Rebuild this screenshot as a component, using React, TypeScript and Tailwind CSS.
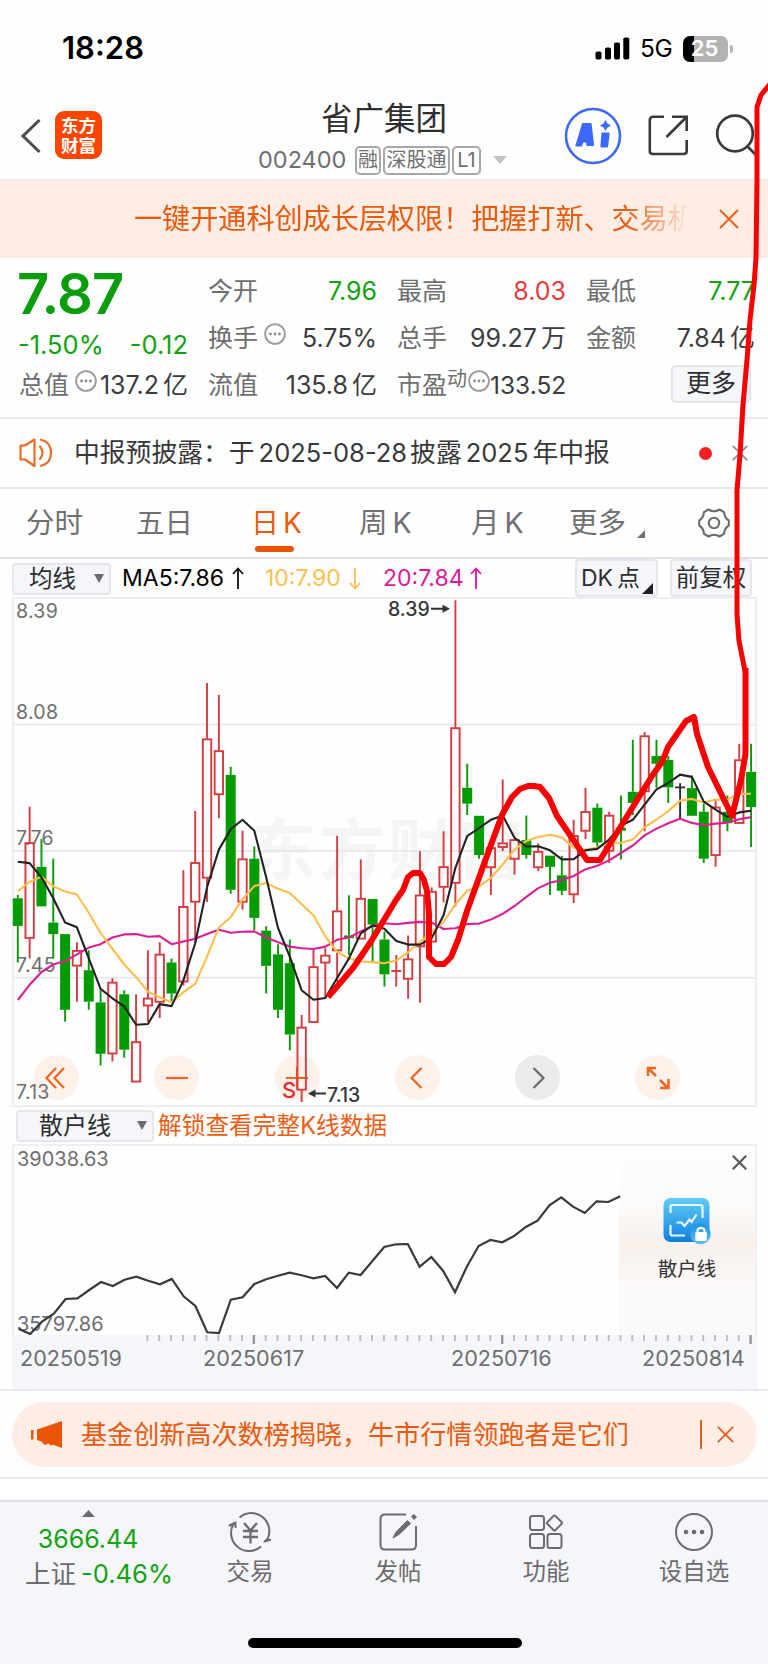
import React from "react";

/* ---------- chart data ---------- */

type Candle = [kind: "r" | "g" | "k", high: number, top: number, bottom: number, low: number];

const CANDLES: Candle[] = [
  ["g", 902, 912, 994, 1102], ["r", 641, 747, 1031, 1090], ["g", 737, 819, 936, 936], ["g", 795, 984, 1018, 1090],
  ["g", 1018, 1018, 1242, 1277], ["r", 1042, 1066, 1113, 1218], ["g", 1066, 1125, 1218, 1242], ["g", 1184, 1220, 1372, 1407],
  ["r", 1149, 1160, 1373, 1395], ["g", 1184, 1196, 1360, 1384], ["r", 1196, 1336, 1456, 1456], ["r", 1066, 1207, 1231, 1277],
  ["r", 1042, 1077, 1220, 1266], ["g", 1090, 1102, 1194, 1218], ["r", 829, 936, 1160, 1170], ["r", 654, 806, 924, 1042],
  ["r", 275, 440, 853, 923], ["r", 311, 475, 606, 675], ["g", 523, 547, 887, 899], ["r", 712, 795, 924, 946],
  ["g", 759, 795, 970, 1006], ["g", 995, 1008, 1112, 1194], ["g", 1048, 1078, 1242, 1266], ["g", 1034, 1104, 1315, 1362],
  ["r", 1257, 1293, 1480, 1515], ["r", 1060, 1114, 1280, 1280], ["r", 1060, 1080, 1104, 1206], ["r", 727, 949, 1068, 1160],
  ["g", 903, 1022, 1030, 1080], ["r", 797, 912, 1033, 1033], ["g", 914, 914, 990, 1102], ["g", 1010, 1034, 1137, 1173],
  ["r", 1080, 1127, 1127, 1173], ["r", 1022, 1091, 1152, 1209], ["r", 773, 902, 1056, 1221], ["r", 880, 891, 1042, 1042],
  ["r", 714, 818, 880, 924], ["r", 30, 407, 868, 936], ["g", 514, 585, 632, 666], ["g", 668, 668, 784, 795],
  ["r", 750, 762, 822, 902], ["r", 561, 748, 762, 772], ["r", 738, 738, 797, 842], ["g", 667, 740, 784, 795],
  ["r", 750, 773, 822, 831], ["g", 786, 786, 819, 902], ["g", 786, 844, 890, 902], ["r", 680, 726, 902, 926],
  ["r", 585, 655, 714, 737], ["g", 632, 644, 747, 762], ["r", 656, 666, 773, 808], ["g", 608, 703, 712, 797],
  ["g", 443, 597, 630, 666], ["r", 420, 431, 597, 714], ["g", 443, 491, 514, 585], ["g", 491, 503, 584, 630],
  ["k", 572, 584, 584, 680], ["g", 549, 586, 668, 668], ["g", 632, 656, 795, 808], ["r", 620, 642, 786, 819],
  ["g", 608, 656, 690, 714], ["r", 455, 502, 691, 691], ["g", 455, 538, 642, 760],
];

const MA5 = [
  804, 808, 850, 912, 984, 998, 1090, 1180, 1208, 1232, 1286, 1284, 1225, 1231, 1155, 1045, 880, 768, 708, 680, 712,
  850, 1000, 1085, 1184, 1212, 1207, 1148, 1090, 1016, 992, 1002, 1038, 1049, 1049, 1030, 962, 822, 728, 704, 680, 667,
  733, 759, 758, 770, 797, 796, 770, 766, 738, 697, 680, 635, 590, 571, 546, 553, 626, 650, 671, 658, 653,
];
const MA10 = [
  891, 864, 848, 877, 892, 901, 955, 1015, 1061, 1108, 1145, 1188, 1205, 1220, 1190, 1165, 1085, 998, 968, 915, 876,
  867, 884, 896, 930, 962, 1025, 1071, 1090, 1099, 1101, 1104, 1096, 1072, 1042, 1012, 982, 930, 890, 877, 852, 812,
  768, 743, 731, 724, 732, 762, 768, 762, 750, 748, 738, 702, 679, 654, 623, 618, 629, 620, 620, 603, 603,
];
const MA20 = [
  1213, 1168, 1130, 1108, 1098, 1078, 1058, 1048, 1028, 1019, 1018, 1026, 1024, 1048, 1040, 1032, 1018, 1005, 1014,
  1011, 1010, 1028, 1042, 1055, 1060, 1062, 1055, 1035, 1028, 1010, 994, 986, 989, 985, 982, 984, 1003, 1001, 988, 987,
  975, 958, 935, 908, 882, 866, 858, 846, 826, 816, 800, 778, 756, 726, 706, 690, 677, 689, 696, 691, 688, 678, 672,
];
const RETAIL = [
  686, 702, 665, 641, 597, 595, 570, 546, 558, 539, 530, 542, 553, 537, 589, 618, 697, 699, 599, 592, 552, 538, 527,
  518, 526, 535, 528, 564, 518, 525, 483, 441, 433, 432, 500, 471, 513, 577, 500, 438, 420, 427, 408, 381, 362, 316,
  292, 320, 339, 304, 306, 289,
];

const STEP = 11.827;
const cx = (i: number) => 5.8 + i * STEP; // relative to the chart's left edge
const cy = (v: number) => v / 2.9585 - 7; // relative to the chart's top edge
const line = (d: number[]) => d.map((v, i) => `${cx(i).toFixed(1)},${cy(v).toFixed(1)}`).join(" ");
const retailLine = RETAIL.map((v, i) => `${(6.4 + i * 11.8).toFixed(1)},${(v / 3 - 44).toFixed(1)}`).join(" ");

const COLORS = { r: "#d43c3f", g: "#049c04", k: "#2b2b2f" };

function CandleShape({ c, i }: { c: Candle; i: number }) {
  const [kind, high, top, bottom, low] = c;
  const x = cx(i);
  const color = COLORS[kind];
  const t = cy(top);
  const b = cy(bottom);
  if (top === bottom) {
    return (
      <g stroke={color} strokeWidth="1.9">
        <path d={`M${x} ${cy(high)}V${cy(low)}M${x - 5} ${t}H${x + 5}`} />
      </g>
    );
  }
  return (
    <g stroke={color} strokeWidth="1.9">
      <path d={`M${x} ${cy(high)}V${t}M${x} ${b}V${cy(low)}`} />
      {kind === "r" ? (
        <rect x={x - 4.2} y={t + 0.6} width="8.4" height={Math.max(b - t - 1.2, 2)} fill="none" />
      ) : (
        <rect x={x - 5} y={t} width="10" height={b - t} fill={color} stroke="none" />
      )}
    </g>
  );
}

/* ---------- small pieces ---------- */

function Close({ size, color, w = 2 }: { size: number; color: string; w?: number }) {
  return (
    <svg width={size} height={size} viewBox="0 0 20 20" className="shrink-0" fill="none" stroke={color} strokeWidth={w}>
      <path d="M1 1L19 19M19 1L1 19" />
    </svg>
  );
}

function Dots() {
  return (
    <svg width="22" height="22" viewBox="0 0 22 22" className="shrink-0">
      <circle cx="11" cy="11" r="9.9" fill="none" stroke="#9a9a9c" strokeWidth="1.8" />
      <g fill="#8a8a8c">
        <circle cx="6.5" cy="11" r="1.4" />
        <circle cx="11" cy="11" r="1.4" />
        <circle cx="15.5" cy="11" r="1.4" />
      </g>
    </svg>
  );
}

function Badge({ children, cls }: { children: React.ReactNode; cls: string }) {
  return (
    <span className={`flex h-[29px] items-center justify-center rounded-[5px] border-2 border-[#a8a8aa] text-[20px] ${cls}`}>
      {children}
    </span>
  );
}

function StatusBar() {
  return (
    <div className="flex h-[97px] items-center pl-[62px]">
      <div className="w-[533px] text-[31px] font-semibold text-black">18:28</div>
      <svg width="35" height="23" viewBox="0 0 35 23" fill="#000">
        <rect x="0.5" y="14.5" width="6" height="8" rx="1.8" />
        <rect x="10" y="10.5" width="6" height="12" rx="1.8" />
        <rect x="19" y="5.5" width="6" height="17" rx="1.8" />
        <rect x="28.3" y="0.5" width="6" height="22" rx="1.8" />
      </svg>
      <div className="ml-[10px] w-[43px] text-[24.5px] tracking-[-0.5px] text-black">5G</div>
      <div className="flex h-[26px] w-[45px] items-center justify-center rounded-[7px] bg-[linear-gradient(90deg,#000_11px,#b3b3b3_11px)] pr-[2px] text-[22px] font-semibold text-white">
        25
      </div>
      <div className="ml-[2px] h-[8px] w-[3px] rounded-r-full bg-[#b3b3b3]" />
    </div>
  );
}

function Header() {
  return (
    <div className="flex h-[82px] pl-[20px]">
      <svg width="22" height="36" viewBox="0 0 22 36" className="mt-[21px] shrink-0" fill="none" stroke="#4d4d4f" strokeWidth="3">
        <path d="M19.5 2L3 18L19.5 34" />
      </svg>
      <div className="ml-[13px] mt-[14px] flex h-[48px] w-[47px] shrink-0 flex-col items-center justify-center rounded-[9px] bg-[#ff4600] font-['Noto_Sans_CJK_SC',sans-serif] text-[17.5px] font-bold leading-[20px] text-white">
        <span>东方</span>
        <span>财富</span>
      </div>
      <div className="ml-[152px] w-[258px] shrink-0">
        <div className="ml-[67px] mt-[5px] h-[34px] text-[31.5px] leading-[34px] text-[#2e2e30]">省广集团</div>
        <div className="ml-[4px] mt-[9px] flex h-[30px] items-center whitespace-nowrap text-[#707072]">
          <span className="w-[97px] text-[23.5px]">002400</span>
          <Badge cls="w-[26px]">融</Badge>
          <Badge cls="ml-[2px] w-[67px]">深股通</Badge>
          <Badge cls="ml-[2px] w-[29px]">L1</Badge>
          <svg width="14" height="8" viewBox="0 0 14 8" className="ml-[12px]">
            <path d="M0 0H14L7 8Z" fill="#c4c4c6" />
          </svg>
        </div>
      </div>
      <svg width="58" height="58" viewBox="0 0 58 58" className="ml-[52px] mt-[10px] shrink-0">
        <circle cx="29" cy="29" r="27" fill="none" stroke="#3c69fb" strokeWidth="2.6" />
        <g fill="#3c69fb" stroke="#3c69fb" strokeWidth="2.2" strokeLinejoin="round">
          <path fillRule="evenodd" d="M19 17H26.5L29 38H23.5L23 34.5H18.5L17 38.5H12.500ZM22.500 24.500L20.800 29.5H22.8Z" />
          <path d="M38.500 26.5H44.500L43 39.500H37.500Z" />
        </g>
        <path d="M41.5 13.500Q42.5 17.500 46.500 18.5Q42.5 19.5 41.5 23.5Q40.5 19.5 36.500 18.5Q40.5 17.500 41.5 13.500Z" fill="#3c69fb" stroke="#3c69fb" strokeWidth="0.800" />
      </svg>
      <svg width="41" height="41" viewBox="0 0 41 41" className="ml-[26px] mt-[18px] shrink-0" fill="none" stroke="#3a3a3c" strokeWidth="2.6">
        <path d="M16 1.8H5Q1.8 1.8 1.8 5V36Q1.8 39 5 39H35.5Q38.7 39 38.7 36V25M24 1.8H38.7V16M38 2.5L18.5 22" />
      </svg>
      <svg width="42" height="44" viewBox="0 0 42 44" className="ml-[26px] mt-[16px] shrink-0" fill="none" stroke="#3a3a3c" strokeWidth="2.7">
        <circle cx="20" cy="20.5" r="17.8" />
        <path d="M32 33L41 42" />
      </svg>
    </div>
  );
}

function Banner() {
  return (
    <div className="flex h-[79px] items-center border-t-2 border-[#f0ebe8] bg-[#fdede4] pl-[134px]">
      <div className="-mt-[2px] w-[556px] overflow-hidden whitespace-nowrap text-[28.1px] leading-[40px] text-[#e85a0c] [mask-image:linear-gradient(90deg,#000_88%,transparent_100%)]">
        一键开通科创成长层权限！把握打新、交易机
      </div>
      <div className="-mt-[2px] ml-[29px] flex">
        <Close size={20} color="#e8601a" w={2} />
      </div>
    </div>
  );
}

function Cell({ label, value, unit, color = "text-[#3c3c3e]", icon }: { label: string; value: string; unit?: string; color?: string; icon?: boolean }) {
  return (
    <div className="flex w-[169px] items-center whitespace-nowrap">
      <span className="text-[25px] text-[#6e6e70]">{label}</span>
      {icon && <span className="-mt-[9px] ml-[6px]"><Dots /></span>}
      <span className={`ml-auto text-[25px] ${color}`}>
        {value}
        {unit && <span className="ml-[4px]">{unit}</span>}
      </span>
    </div>
  );
}

function Quote() {
  return (
    <div className="h-[161px] border-b-2 border-[#ebebee] pl-[19px] pt-[10px]">
      <div className="flex h-[94px]">
        <div className="w-[189px]">
          <div className="-ml-[2px] mt-[4px] h-[45px] text-[56px] font-semibold leading-[45px] tracking-[-0.8px] text-[#0a9d0a]">7.87</div>
          <div className="mt-[13px] flex h-[30px] w-[169px] items-center justify-between text-[25.5px] text-[#0fa30f]">
            <span className="-ml-[1px]">-1.50%</span>
            <span>-0.12</span>
          </div>
        </div>
        <div className="flex flex-col">
          <div className="flex h-[47px] gap-[20px]">
            <Cell label="今开" value="7.96" color="text-[#0fa30f]" />
            <Cell label="最高" value="8.03" color="text-[#ea3a3c]" />
            <Cell label="最低" value="7.77" color="text-[#0fa30f]" />
          </div>
          <div className="flex h-[47px] gap-[20px]">
            <Cell label="换手" value="5.75%" icon />
            <Cell label="总手" value="99.27" unit="万" />
            <Cell label="金额" value="7.84" unit="亿" />
          </div>
        </div>
      </div>
      <div className="flex h-[47px] gap-[20px]">
        <Cell label="总值" value="137.2" unit="亿" icon />
        <Cell label="流值" value="135.8" unit="亿" />
        <div className="flex w-[169px] items-center whitespace-nowrap">
          <span className="text-[25px] text-[#6e6e70]">市盈</span>
          <span className="-mt-[14px] text-[20px] text-[#6e6e70]">动</span>
          <span className="-mt-[9px] ml-[1px]"><Dots /></span>
          <span className="ml-auto text-[24.5px] text-[#3c3c3e]">133.52</span>
        </div>
        <div className="ml-[85px] mt-[3px] flex h-[38px] w-[80px] items-center justify-center rounded-[5px] border-2 border-[#e4e5ea] bg-[#f5f6fa] text-[25px] text-[#2e2e30]">
          更多
        </div>
      </div>
    </div>
  );
}

function Notice() {
  return (
    <div className="flex h-[70px] items-center border-b-2 border-[#e9e9ec] pl-[19px]">
      <svg width="35" height="30" viewBox="0 0 35 30" fill="none" stroke="#ee6a24" strokeWidth="2.2" strokeLinejoin="round" strokeLinecap="round">
        <path d="M1.5 7.5H6L15.5 1.5V28L6 21.5H1.5Z" />
        <path d="M21 8.5Q26 14.5 21 21M22 1.8Q32 4 32 14.8Q32 25.5 22 27.8" />
      </svg>
      <div className="ml-[20px] w-[625px] whitespace-nowrap text-[25.8px] text-[#38383a]">
        中报预披露：于<span className="ml-[4px] mr-[3px] text-[25.500px]">2025-08-28</span>披露<span className="mx-[4px] text-[25.500px]">2025</span>年中报
      </div>
      <div className="h-[13px] w-[13px] rounded-full bg-[#f41f22]" />
      <div className="ml-[20px] flex">
        <Close size={16} color="#8f8f91" w={2.2} />
      </div>
    </div>
  );
}

function Tabs() {
  const tab = "whitespace-nowrap text-[28.500px] text-[#707072]";
  return (
    <div className="flex h-[70px] border-b-2 border-[#e2e3e9] pl-[26px] leading-[68px]">
      <div className={`w-[110px] ${tab}`}>分时</div>
      <div className={`w-[115px] ${tab}`}>五日</div>
      <div className="flex w-[108px] flex-col whitespace-nowrap text-[28px] text-[#ee5a0c]">
        <div className="h-[57px]">日<span className="ml-[4px]">K</span></div>
        <div className="ml-[4px] h-[6px] w-[39px] rounded-full bg-[#ea5504]" />
      </div>
      <div className={`w-[112px] ${tab}`}>周<span className="ml-[5px]">K</span></div>
      <div className={`w-[98px] ${tab}`}>月<span className="ml-[5px]">K</span></div>
      <div className={`flex w-[129px] ${tab}`}>
        更多
        <svg width="8" height="8" viewBox="0 0 8 8" className="ml-[11px] mt-[41px]"><path d="M8 0V8H0Z" fill="#707072" /></svg>
      </div>
      <svg width="32" height="30" viewBox="0 0 32 30" className="mt-[19px]" fill="none" stroke="#6c6c6e" strokeWidth="2.1" strokeLinejoin="round">
        <path d="M10.5 1.5Q16 5 21.5 1.5L26 4.2Q26.5 9.8 30.8 12.5V17.5Q26.5 20.2 26 25.8L21.5 28.5Q16 25 10.5 28.5L6 25.8Q5.5 20.2 1.2 17.5V12.5Q5.5 9.8 6 4.2Z" />
        <circle cx="16" cy="15" r="5.2" />
      </svg>
    </div>
  );
}

function Arrow({ color, down }: { color: string; down?: boolean }) {
  return (
    <svg width="12" height="23" viewBox="0 0 12 23" className="shrink-0" fill="none" stroke={color} strokeWidth="1.8">
      {down ? <path d="M6 1V21.5M1 16L6 21.5L11 16" /> : <path d="M6 22V1.5M1 7L6 1.5L11 7" />}
    </svg>
  );
}

function Toolbar() {
  return (
    <div className="flex h-[38px] items-center whitespace-nowrap pl-[12px] text-[23px]">
      <div className="mt-[1px] flex h-[32px] w-[99px] items-center rounded-[4px] border-2 border-[#e6e7ec] bg-[#f5f6fa] pl-[15px] text-[23.5px] text-[#2e2e30]">
        均线
        <svg width="10" height="9" viewBox="0 0 10 9" className="ml-auto mr-[5px]"><path d="M0 0H10L5 9Z" fill="#6c6c6e" /></svg>
      </div>
      <div className="ml-[11px] flex w-[143px] items-center text-black"><span className="w-[110px]">MA5:7.86</span><Arrow color="#111" /></div>
      <div className="flex w-[118px] items-center text-[#fcc04f]"><span className="w-[84px]">10:7.90</span><Arrow color="#fcc04f" down /></div>
      <div className="flex w-[192px] items-center text-[#e0179a]"><span className="w-[87px]">20:7.84</span><Arrow color="#e0179a" /></div>
      <div className="relative flex h-[38px] w-[83px] items-center rounded-[4px] border-2 border-[#e6e7ec] bg-[#f5f6fa] pl-[4px] text-[#2e2e30]">
        DK<span className="ml-[4px]">点</span>
        <svg width="11" height="11" viewBox="0 0 11 11" className="absolute bottom-[1px] right-[3px]"><path d="M11 0V11H0Z" fill="#1f1f21" /></svg>
      </div>
      <div className="ml-[12px] flex h-[38px] w-[82px] items-center justify-center rounded-[4px] border-2 border-[#e6e7ec] bg-[#f5f6fa] text-[23.5px] text-[#2e2e30]">
        前复权
      </div>
    </div>
  );
}

function Controls() {
  const base = "flex h-[45px] w-[45px] items-center justify-center rounded-full";
  const svg = { width: 28, height: 28, viewBox: "0 0 28 28", fill: "none", strokeWidth: 2.2 };
  return (
    <div className="absolute left-[20px] top-[456px] flex gap-[75.3px]">
      <div className={`${base} bg-[#fef1ea]`}>
        <svg {...svg} stroke="#ee6420"><path d="M13 4L3.5 14L13 24M21 4L11.5 14L21 24" /></svg>
      </div>
      <div className={`${base} bg-[#fef1ea]`}>
        <svg {...svg} stroke="#ee6420"><path d="M3 14H25" /></svg>
      </div>
      <div className={`${base} bg-[#fef1ea]`}>
        <svg {...svg} stroke="#ee6420"><path d="M3 14H25M14 3V25" /></svg>
      </div>
      <div className={`${base} bg-[#fef1ea]`}>
        <svg {...svg} stroke="#ee6420"><path d="M18.5 4L8.5 14L18.5 24" /></svg>
      </div>
      <div className={`${base} bg-[#ebebeb]`}>
        <svg {...svg} stroke="#6a6a6c"><path d="M9.5 4L19.5 14L9.5 24" /></svg>
      </div>
      <div className={`${base} bg-[#fef1ea]`}>
        <svg {...svg} stroke="#ee6420" strokeWidth={2.5}><path d="M4 12V4H12M4 4L12 12M24.5 15V24H16M24 24L16 16" /></svg>
      </div>
    </div>
  );
}

function KChart() {
  const lab = "absolute left-[2px] text-[19.5px] leading-[20px] tracking-[0.3px] text-[#6e6e70]";
  return (
    <div className="relative ml-[12px] h-[510px] w-[745px] border-2 border-[#efeff2]">
      <div className="absolute left-[236px] top-[206px] whitespace-nowrap text-[66px] font-bold leading-[90px] tracking-[3px] text-[#f5f5f6]">东方财富</div>
      <Controls />
      <svg width="745" height="510" viewBox="0 0 745 510" className="absolute -left-[2px] -top-[2px]">
        <path d="M0 127.5H745M0 254H745M0 380.8H745" stroke="#e9e9f2" strokeWidth="2" />
      </svg>
      <div className={`${lab} top-[2px]`}>8.39</div>
      <div className={`${lab} top-[103px]`}>8.08</div>
      <div className={`${lab} top-[229px]`}>7.76</div>
      <div className={`${lab} top-[356px]`}>7.45</div>
      <div className={`${lab} top-[483px]`}>7.13</div>
      <svg width="745" height="510" viewBox="0 0 745 510" className="absolute -left-[2px] -top-[2px]">
        {CANDLES.map((c, i) => <CandleShape key={i} c={c} i={i} />)}
        <g fill="none" strokeWidth="2.1" strokeLinejoin="round">
          <polyline points={line(MA20)} stroke="#dc1f96" />
          <polyline points={line(MA10)} stroke="#fdbe4c" />
          <polyline points={line(MA5)} stroke="#222" />
        </g>
        <path d="M419 11.8H433M298 496.5H314" stroke="#333" strokeWidth="2" />
        <path d="M438 11.8L430.5 7.8V15.8ZM296 496.5L303.5 492.5V500.5Z" fill="#333" />
      </svg>
      <div className="absolute left-[374px] top-[0px] text-[19.5px] font-medium leading-[20px] text-[#38383a]">8.39</div>
      <div className="absolute left-[313px] top-[486px] text-[19.5px] font-medium leading-[20px] text-[#38383a]">7.13</div>
      <div className="absolute left-[268px] top-[479px] text-[22px] font-medium leading-[24px] text-[#ec2a2c]">S</div>
    </div>
  );
}

function RetailPanel() {
  const ticks = Array.from({ length: 52 }, (_, k) => k);
  return (
    <div>
      <div className="flex h-[37px] items-center whitespace-nowrap pl-[16px] text-[24px]">
        <div className="flex h-[32px] w-[138px] items-center rounded-[4px] border-2 border-[#e6e7ec] bg-[#f5f6fa] pl-[21px] text-[#2e2e30]">
          散户线
          <svg width="10" height="9" viewBox="0 0 10 9" className="ml-auto mr-[5px]"><path d="M0 0H10L5 9Z" fill="#6c6c6e" /></svg>
        </div>
        <div className="ml-[4px] text-[23.7px] text-[#ec5d14]">解锁查看完整K线数据</div>
      </div>
      <div className="relative ml-[12px] h-[191px] w-[745px] border-2 border-b-0 border-[#efeff2]">
        <div className="absolute left-[3px] top-[3px] text-[20px] leading-[20px] text-[#6e6e70]">39038.63</div>
        <div className="absolute left-[3px] top-[168px] text-[20px] leading-[20px] text-[#6e6e70]">35797.86</div>
        <svg width="745" height="191" viewBox="0 0 745 191" className="absolute -left-[2px] -top-[2px]">
          <polyline points={retailLine} fill="none" stroke="#3a3a3c" strokeWidth="2.2" />
        </svg>
        <div className="ml-[605px] flex h-[189px] flex-col items-center bg-[linear-gradient(180deg,#fdfdfd_0%,#fcfbfa_30%,#f7f0eb_52%,#faf5f2_64%,#fbf9f8_74%,#fafafa_100%)]">
          <div className="mr-[8px] mt-[9px] flex self-end"><Close size={15} color="#5c5c5e" w={3} /></div>
          <svg width="48" height="47" viewBox="0 0 48 47" className="mt-[28px]">
            <defs>
              <linearGradient id="tile" x1="0" y1="0" x2="0" y2="1">
                <stop offset="0" stopColor="#62cdf6" />
                <stop offset="1" stopColor="#0f7fe0" />
              </linearGradient>
              <linearGradient id="lock" x1="0" y1="0" x2="0" y2="1">
                <stop offset="0" stopColor="#1f90e4" />
                <stop offset="1" stopColor="#5cc0f4" />
              </linearGradient>
            </defs>
            <rect x="0.5" y="0" width="46" height="44" rx="7" fill="url(#tile)" />
            <g fill="none" stroke="#e6f6ff" strokeWidth="2.2">
              <path d="M7.5 15V9Q7.5 7 9.5 7H37.5Q39.5 7 39.5 9V20M7.5 27V35.5Q7.5 37.500 9.5 37.5H22" />
              <path d="M13.5 24.5H18.5L21.5 28L26.5 21.5L28.5 24L33.5 16.5" />
            </g>
            <circle cx="37.5" cy="36" r="10.3" fill="url(#lock)" />
            <rect x="32.3" y="34" width="11.5" height="9" rx="1" fill="#fff" />
            <path d="M34.5 34.5V32.5Q34.5 30 38 30Q41.5 30 41.5 32.5V34.5" fill="none" stroke="#fff" strokeWidth="2" />
          </svg>
          <div className="mt-[10px] text-[19.5px] leading-[28px] text-[#333335]">散户线</div>
        </div>
      </div>
      <div className="ml-[12px] h-[54px] w-[745px] bg-[#f5f6f9]">
        <svg width="745" height="11" viewBox="0 0 745 11" className="block">
          {ticks.map((k) => {
            const i = 62 - k;
            const major = k === 0 || k === 21 || k === 42;
            const x = cx(i) - 0.5;
            return <path key={k} d={`M${x} 0V${major ? 9 : 6}`} stroke={major ? "#97979a" : "#b9b9bc"} strokeWidth={major ? 2.4 : 1.8} />;
          })}
        </svg>
        <div className="flex h-[25px] items-center whitespace-nowrap pl-[8px] text-[21.6px] text-[#6e6e70]">
          <span className="w-[183px]">20250519</span>
          <span className="w-[248px]">20250617</span>
          <span className="w-[191px]">20250716</span>
          <span>20250814</span>
        </div>
      </div>
    </div>
  );
}

function Promo() {
  return (
    <div className="h-[90px] border-y-2 border-[#e9eaef] px-[12px] pt-[11px]">
      <div className="flex h-[65px] w-[745px] items-center rounded-full bg-[#fdede4] pl-[19px]">
        <svg width="31" height="27" viewBox="0 0 31 27" fill="#ea5508">
          <path d="M0 9H2.5V18.5H0Z" />
          <path d="M6 8.5L31 0V27L22 23.8L19.5 24.5L17.5 22.5L13.5 24L10.5 20.5L6 19Z" />
        </svg>
        <div className="ml-[19px] w-[619px] whitespace-nowrap text-[26.1px] text-[#e85a10]">基金创新高次数榜揭晓，牛市行情领跑者是它们</div>
        <div className="h-[29px] w-[2px] bg-[#e8611c]" />
        <div className="ml-[15px] flex"><Close size={17} color="#e8611c" w={2.2} /></div>
      </div>
    </div>
  );
}

function NavItem({ label, children }: { label: string; children: React.ReactNode }) {
  return (
    <div className="flex w-[148px] flex-col items-center">
      <svg width="44" height="40" viewBox="0 0 44 40" fill="none" stroke="#6c6c6e" strokeWidth="2" strokeLinejoin="round">{children}</svg>
      <div className="mt-[4px] text-[23.5px] leading-[32px] text-[#6c6c6e]">{label}</div>
    </div>
  );
}

function BottomNav() {
  return (
    <>
      <div className="h-[21px] bg-white" />
      <div className="flex h-[164px] flex-col items-center border-t-2 border-[#dfe0e6] bg-[#f5f6f9]">
        <div className="flex h-[136px] w-full">
          <div className="flex w-[177px] flex-col items-center whitespace-nowrap">
            <svg width="13" height="7" viewBox="0 0 13 7" className="mt-[8px]"><path d="M0 7L6.5 0L13 7Z" fill="#6c6c6e" /></svg>
            <div className="mt-[8px] text-[25px] leading-[28px] text-[#12a312]">3666.44</div>
            <div className="ml-[22px] mt-[5px] flex h-[32px] items-center">
              <span className="text-[25.5px] text-[#6c6c6e]">上证</span>
              <span className="ml-[5px] text-[25.5px] text-[#12a312]">-0.46%</span>
            </div>
          </div>
          <div className="flex pt-[10px]">
            <NavItem label="交易">
              <path d="M11.5 5.5A18 18 0 0 1 39.5 27L36.5 29.5L43 27.5M33 34.5A18 18 0 0 1 5.5 12L1.5 13.5L7.5 10.5V16" />
              <path d="M16 11L22.5 18.5L29 11M15 19H30M15 25H30M22.5 18V31.5" strokeWidth="2.3" />
            </NavItem>
            <NavItem label="发帖">
              <path d="M30 2.5H9Q4.5 2.5 4.5 7V33Q4.5 37.5 9 37.5H35.5Q40 37.5 40 33V14" />
              <path d="M17 26L20 20L31.500 8.500L34.500 11.500L23 22.500ZM35.500 4.500L38 2.500L40.500 5L38 7.500Z" fill="#6c6c6e" strokeWidth="1" />
            </NavItem>
            <NavItem label="功能">
              <rect x="6" y="4" width="14" height="14" rx="2.5" />
              <path d="M29.500 4Q30.500 3 31.500 4L37.500 10Q38.500 11 37.500 12L31.500 18Q30.500 19 29.500 18L23.500 12Q22.500 11 23.500 10Z" />
              <rect x="6" y="22" width="14" height="14" rx="2.5" />
              <rect x="23.5" y="22" width="14" height="14" rx="2.5" />
            </NavItem>
            <NavItem label="设自选">
              <circle cx="22" cy="20" r="18" />
              <g fill="#6c6c6e" stroke="none">
                <circle cx="14" cy="20" r="2.3" /><circle cx="22" cy="20" r="2.3" /><circle cx="30" cy="20" r="2.3" />
              </g>
            </NavItem>
          </div>
        </div>
        <div className="ml-[2px] h-[10px] w-[274px] rounded-full bg-black" />
      </div>
    </>
  );
}

function Annotation() {
  return (
    <svg width="768" height="1664" viewBox="0 0 768 1664" className="pointer-events-none absolute left-0 top-0" fill="none" stroke="#fb0000" strokeLinejoin="round">
      <path d="M770 84L761 95L757 107V180L756 258L754 285L750 320L747 360L743 405L740 455L737 490V615L739 641L745 671" strokeWidth="5" />
      <path
        d="M745.500 668V754L741 780L732 816L708 767L697 734L694 717L686 721L668 747L662 762L652 776L600 860H587L557 816L549 798L540 787L534 786H528L520 789L512 797L502 815L485 861L467 911L458 940L451 957L444 964H436L429 957V914L427 891L424 880L420 873H413L408 877L403 890L396 900L370 943L353 968L328 997"
        strokeWidth="6"
      />
    </svg>
  );
}

export default function App() {
  return (
    <div className="relative h-[1664px] w-[768px] overflow-hidden bg-[#fefefe] font-['Inter','Noto_Sans_CJK_SC',sans-serif]">
      <StatusBar />
      <Header />
      <Banner />
      <Quote />
      <Notice />
      <Tabs />
      <Toolbar />
      <KChart />
      <RetailPanel />
      <Promo />
      <BottomNav />
      <Annotation />
    </div>
  );
}
